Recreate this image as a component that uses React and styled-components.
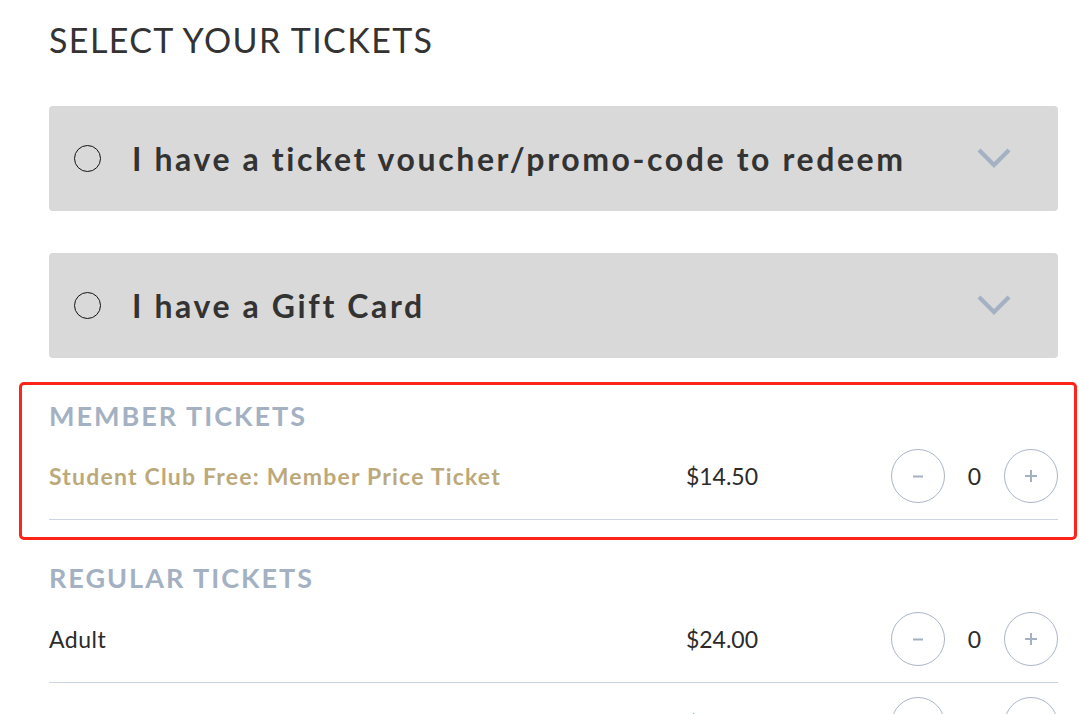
import styled, { createGlobalStyle } from "styled-components"

const GlobalStyle = createGlobalStyle`
  body {
    margin: 0;
    background: #ffffff;
    font-family: Lato, "Liberation Sans", sans-serif;
    overflow: hidden;
  }
`

const Page = styled.div`
  width: 1009px;
  margin-left: 49px;
  padding-top: 20px;
`

const Title = styled.h1`
  margin: 0;
  font-size: 34px;
  line-height: 1.2;
  font-weight: 400;
  letter-spacing: 1.4px;
  color: #333333;
`

const Option = styled.div`
  display: flex;
  align-items: center;
  height: 105px;
  margin-top: ${(p) => p.$top}px;
  padding: 0 46px 0 25px;
  background: #d9d9d9;
  border-radius: 4px;
`

const Radio = styled.span`
  width: 25px;
  height: 25px;
  border: 1.8px solid #111111;
  border-radius: 50%;
  flex-shrink: 0;
`

const OptionLabel = styled.span`
  flex: 1;
  margin-left: 31px;
  font-size: 32px;
  font-weight: 700;
  letter-spacing: 2.6px;
  color: #333333;
`

const Highlight = styled.div`
  margin: 24px -19px 0 -30px;
  padding: 15px 16px 17px 27px;
  border: 3px solid #ff2419;
  border-radius: 5px;
`

const Section = styled.div`
  margin-top: ${(p) => p.$top || 0}px;
`

const SectionTitle = styled.h2`
  margin: 0;
  font-size: 27px;
  line-height: 1.2;
  font-weight: 700;
  letter-spacing: 2px;
  color: #a3b1c3;
`

const Row = styled.div`
  display: grid;
  grid-template-columns: 1fr 160px 167px;
  column-gap: 89px;
  align-items: center;
  padding: ${(p) => (p.$first ? 17 : 14)}px 0 16px;
  border-bottom: 1.5px solid #cbd5e1;
`

const Name = styled.span`
  font-size: 23px;
  font-weight: ${(p) => (p.$member ? 700 : 400)};
  letter-spacing: ${(p) => (p.$member ? 1.2 : 0.5)}px;
  color: ${(p) => (p.$member ? "#bca97b" : "#2b2b2b")};
`

const Price = styled.span`
  text-align: center;
  font-size: 23px;
  color: #2b2b2b;
`

const Counter = styled.div`
  display: flex;
  align-items: center;
  justify-content: space-between;
`

const RoundButton = styled.button`
  display: flex;
  align-items: center;
  justify-content: center;
  width: 54px;
  height: 54px;
  padding: 0;
  background: #ffffff;
  border: 1.5px solid #aab6c7;
  border-radius: 50%;
  cursor: pointer;
`

const Count = styled.span`
  font-size: 23px;
  color: #2b2b2b;
`

function Chevron() {
  return (
    <svg width="36" height="24" viewBox="0 0 36 24">
      <path d="M3 4 L18 19 L33 4" fill="none" stroke="#a3b1c3" strokeWidth="4.2" />
    </svg>
  )
}

function Minus() {
  return (
    <svg width="12" height="12" viewBox="0 0 12 12">
      <path d="M1 6.5 H11" stroke="#a3b0c1" strokeWidth="2" />
    </svg>
  )
}

function Plus() {
  return (
    <svg width="14" height="14" viewBox="0 0 14 14">
      <path d="M1 7 H13 M7 1 V13" stroke="#a3b0c1" strokeWidth="2" />
    </svg>
  )
}

function TicketRow({ name, price, member, first }) {
  return (
    <Row $first={first}>
      <Name $member={member}>{name}</Name>
      <Price>{price}</Price>
      <Counter>
        <RoundButton aria-label="remove"><Minus /></RoundButton>
        <Count>0</Count>
        <RoundButton aria-label="add"><Plus /></RoundButton>
      </Counter>
    </Row>
  )
}

function App() {
  return (
    <>
      <GlobalStyle />
      <Page>
        <Title>SELECT YOUR TICKETS</Title>
        <Option $top={45}>
          <Radio />
          <OptionLabel>I have a ticket voucher/promo-code to redeem</OptionLabel>
          <Chevron />
        </Option>
        <Option $top={42}>
          <Radio />
          <OptionLabel>I have a Gift Card</OptionLabel>
          <Chevron />
        </Option>
        <Highlight>
          <SectionTitle>MEMBER TICKETS</SectionTitle>
          <TicketRow first member name="Student Club Free: Member Price Ticket" price="$14.50" />
        </Highlight>
        <Section $top={22}>
          <SectionTitle>REGULAR TICKETS</SectionTitle>
          <TicketRow first name="Adult" price="$24.00" />
          <TicketRow name="Senior" price="$21.50" />
        </Section>
      </Page>
    </>
  )
}

export default App
